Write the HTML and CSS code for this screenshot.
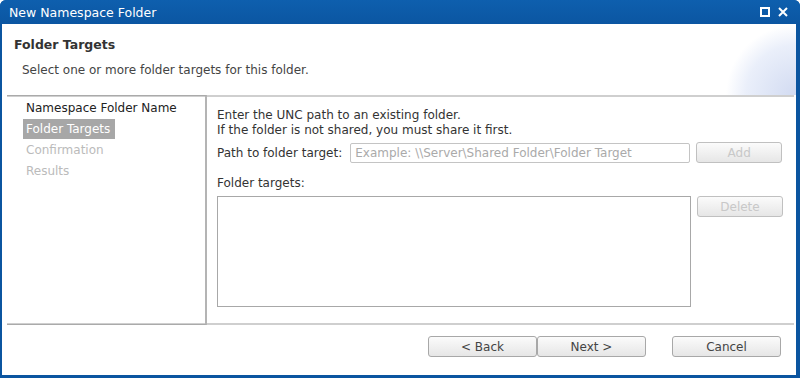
FILE: index.html
```html
<!DOCTYPE html>
<html lang="en">
<head>
  <meta charset="UTF-8">
  <title>New Namespace Folder</title>
  <link rel="stylesheet" href="styles.css">
</head>
<body>

<div class="window">
  <div class="titlebar">
    <span class="title">New Namespace Folder</span>
    <div class="title-buttons">
      <svg width="10" height="10" viewBox="0 0 10 10"><rect x="1" y="1" width="8" height="8" fill="none" stroke="#fff" stroke-width="2"/></svg>
      <svg width="10" height="10" viewBox="0 0 10 10"><path d="M1 1 L9 9 M9 1 L1 9" stroke="#fff" stroke-width="2"/></svg>
    </div>
  </div>

  <div class="client">
    <div class="header">
      <h1>Folder Targets</h1>
      <p>Select one or more folder targets for this folder.</p>
    </div>

    <div class="body">
      <ul class="steps">
        <li>Namespace Folder Name</li>
        <li class="current">Folder Targets</li>
        <li class="disabled">Confirmation</li>
        <li class="disabled">Results</li>
      </ul>

      <div class="page">
        <p class="intro">Enter the UNC path to an existing folder.<br>If the folder is not shared, you must share it first.</p>
        <div class="row">
          <label>Path to folder target:</label>
          <input class="path" type="text" placeholder="Example: \\Server\Shared Folder\Folder Target">
          <button class="btn" disabled>Add</button>
        </div>
        <div class="targets-label">Folder targets:</div>
        <div class="row top">
          <div class="listbox"></div>
          <button class="btn" disabled>Delete</button>
        </div>
      </div>
    </div>

    <div class="footer">
      <button class="btn wide">&lt; Back</button>
      <button class="btn wide">Next &gt;</button>
      <button class="btn wide cancel">Cancel</button>
    </div>
  </div>
</div>

</body>
</html>
```

FILE: styles.css
```css
/* general */
body {
  margin: 0;
  padding: 0;
  font-family: "DejaVu Sans", Verdana, sans-serif;
  font-size: 12px;
  color: #222;
  background: #fff;
}

.window {
  width: 800px;
  height: 378px;
  box-sizing: border-box;
  background: #0b55a0;
  border-radius: 6px 6px 0 0;
  padding: 0 4px 3px 2px;
  display: flex;
  flex-direction: column;
}

.titlebar {
  height: 24px;
  display: flex;
  align-items: center;
  justify-content: space-between;
  background: linear-gradient(#0e5fae, #0b56a2);
  border-radius: 6px 6px 0 0;
  margin: 0 -4px 0 -2px;
  padding-left: 9px;
  padding-right: 12px;
}
.title {
  color: #fff;
  font-size: 12.5px;
}
.title-buttons {
  display: flex;
  gap: 8px;
}

.client {
  flex: 1;
  background: #fff;
  display: flex;
  flex-direction: column;
}

.header {
  height: 71px;
  box-sizing: border-box;
  padding: 13px 0 0 12px;
  background:
    radial-gradient(circle at 100% 100%, rgba(205, 215, 240, 0.9) 0, rgba(225, 232, 248, 0.7) 50px, rgba(255, 255, 255, 0) 70px),
    #fff;
}
.header h1 {
  margin: 0;
  font-size: 12.5px;
  font-weight: bold;
  color: #333;
}
.header p {
  margin: 11px 0 0 8px;
  color: #444;
}

.body {
  margin: 0 0 0 5px;
  width: 787px;
  height: 226px;
  display: flex;
  border-top: 2px solid #cfcfcf;
  border-bottom: 2px solid #cfcfcf;
}

.steps {
  list-style: none;
  margin: -2px 0 -2px 0;
  padding: 2px 0 0 16px;
  width: 182px;
  border-top: 1px solid #aaa;
  border-bottom: 1px solid #aaa;
  border-right: 2px solid #b4b4b4;
}
.steps li {
  display: table;
  padding: 2px 5px 1px 3px;
  line-height: 17px;
  margin-bottom: 1px;
}
.steps li.current {
  background: #a7a7a7;
  color: #fff;
}
.steps li.disabled {
  color: #bbb;
}

.page {
  flex: 1;
  padding: 11px 0 0 10px;
  color: #333;
}
.intro {
  margin: 0;
  line-height: 15px;
}
.row {
  display: flex;
  align-items: center;
  margin-top: 4px;
}
.row.top {
  align-items: flex-start;
  margin-top: 6px;
}
.row label {
  margin-right: 8px;
}
.path {
  width: 340px;
  height: 20px;
  box-sizing: border-box;
  border: 1px solid #c4c4c4;
  border-radius: 2px;
  padding: 0 4px;
  font-family: inherit;
  font-size: 12px;
}
.path::placeholder {
  color: #aaa;
}
.targets-label {
  margin-top: 13px;
}
.listbox {
  width: 474px;
  height: 111px;
  box-sizing: border-box;
  border: 1px solid #a8a8a8;
}

.btn {
  margin-left: 6px;
  width: 86px;
  height: 21px;
  border: 1px solid #a8a8a8;
  border-radius: 3px;
  background: linear-gradient(#fbfbfb, #e6e6e6);
  font-family: inherit;
  font-size: 12px;
  color: #444;
  padding: 0;
}
.btn:disabled {
  color: #c8c8c8;
  border-color: #c0c0c0;
}

.footer {
  display: flex;
  padding: 11px 0 0 426px;
}
.footer .btn {
  margin: 0;
  width: 109px;
}
.footer .cancel {
  margin-left: 26px;
}
```
